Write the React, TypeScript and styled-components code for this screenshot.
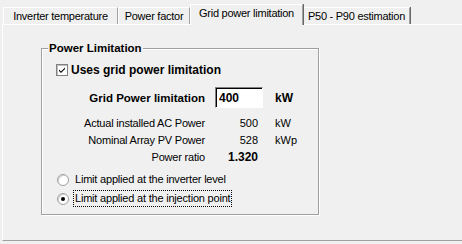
import React from 'react';
import styled, { createGlobalStyle } from 'styled-components';

// Grid power limitation tab of a classic Windows property sheet

const GlobalStyle = createGlobalStyle`
  html, body {
    margin: 0;
    padding: 0;
    background: #f0f0f0;
    width: 462px;
    height: 244px;
    overflow: hidden;
  }
  * {
    box-sizing: border-box;
  }
`;

const Window = styled.div`
  width: 462px;
  height: 244px;
  padding: 4px 0 0 2px;
  font-family: 'Liberation Sans', Arial, sans-serif;
  color: #000;
`;

const TabStrip = styled.div`
  display: flex;
  align-items: flex-end;
  height: 20px;
  padding-left: 1px;
  position: relative;
  z-index: 1;
`;

const Tab = styled.div<{ $active?: boolean; $w: number }>`
  width: ${(p) => p.$w}px;
  height: ${(p) => (p.$active ? '21px' : '17px')};
  margin-bottom: ${(p) => (p.$active ? '-1px' : '0')};
  padding-top: 2px;
  text-align: center;
  background: #f0f0f0;
  border-top: 1px solid #fff;
  border-left: 1px solid #fff;
  border-right: 1px solid #a0a0a0;
  box-shadow: 1px 0 0 #696969;
  font-size: 11px;
  letter-spacing: -0.25px;
  line-height: 13px;
  white-space: nowrap;
  position: relative;
  z-index: ${(p) => (p.$active ? 2 : 0)};
`;

const Panel = styled.div`
  height: 217px;
  width: 470px;
  border-top: 1px solid #fff;
  border-left: 1px solid #fff;
  border-bottom: 1px solid #a0a0a0;
  padding: 23px 0 0 38px;
`;

const GroupBox = styled.div`
  position: relative;
  width: 278px;
  height: 167px;
  border: 1px solid #a0a0a0;
  box-shadow: inset 1px 1px 0 #fff, 1px 1px 0 #fff;
  padding: 14px 0 0 0;
`;

const Legend = styled.div`
  position: absolute;
  top: -8px;
  left: 6px;
  padding: 0 1px;
  background: #f0f0f0;
  font-weight: bold;
  font-size: 11.5px;
  line-height: 14px;
`;

const CheckRow = styled.label`
  display: flex;
  align-items: center;
  gap: 3px;
  height: 13px;
  margin-left: 14px;
  font-weight: bold;
  font-size: 12px;
`;

const CheckBox = styled.span`
  width: 12px;
  height: 12px;
  background: #fff;
  border: 1px solid #808080;
  box-shadow: inset 1px 1px 0 #c0c0c0;
  display: flex;
  align-items: center;
  justify-content: center;
`;

const FieldRow = styled.div<{ $h: number; $top: number }>`
  display: grid;
  grid-template-columns: 163px 48px 1fr;
  column-gap: 10px;
  align-items: center;
  height: ${(p) => p.$h}px;
  margin-top: ${(p) => p.$top}px;
  font-size: 11px;
`;

const Label = styled.div<{ $bold?: boolean }>`
  text-align: right;
  white-space: nowrap;
  font-weight: ${(p) => (p.$bold ? 'bold' : 'normal')};
  font-size: ${(p) => (p.$bold ? '11.5px' : '11px')};
  letter-spacing: ${(p) => (p.$bold ? '0' : '-0.2px')};
`;

const Value = styled.div<{ $bold?: boolean }>`
  text-align: right;
  padding-right: 5px;
  font-weight: ${(p) => (p.$bold ? 'bold' : 'normal')};
  font-size: ${(p) => (p.$bold ? '12px' : '11px')};
`;

const Unit = styled.div<{ $bold?: boolean }>`
  padding-left: 2px;
  font-weight: ${(p) => (p.$bold ? 'bold' : 'normal')};
  font-size: ${(p) => (p.$bold ? '12px' : '11px')};
`;

const Input = styled.div`
  height: 21px;
  background: #fff;
  border-top: 1px solid #808080;
  border-left: 1px solid #808080;
  border-right: 1px solid #fff;
  border-bottom: 1px solid #fff;
  box-shadow: inset 1px 1px 0 #000;
  padding: 3px 0 0 3px;
  font-weight: bold;
  font-size: 12px;
  line-height: 14px;
`;

const RadioRow = styled.label<{ $top: number }>`
  display: flex;
  align-items: center;
  gap: 5px;
  height: 17px;
  margin: ${(p) => p.$top}px 0 0 15px;
  font-size: 11px;
  letter-spacing: -0.2px;
`;

const RadioDot = styled.span<{ $checked?: boolean }>`
  width: 12px;
  height: 12px;
  border-radius: 50%;
  background: #fff;
  border: 1px solid #a0a0a0;
  box-shadow: inset 1px 1px 0 #d0d0d0;
  display: flex;
  align-items: center;
  justify-content: center;
  &::after {
    content: '';
    width: 4px;
    height: 4px;
    border-radius: 50%;
    background: ${(p) => (p.$checked ? '#000' : 'transparent')};
  }
`;

const RadioText = styled.span<{ $focused?: boolean }>`
  padding: 1px 1px;
  line-height: 13px;
  outline: ${(p) => (p.$focused ? '1px dotted #000' : 'none')};
`;

const CheckMark = () => (
  <svg width="8" height="8" viewBox="0 0 8 8">
    <path d="M1 3.5 L3 5.5 L7 1.5 L7 3 L3 7 L1 5 Z" fill="#000" />
  </svg>
);

const tabs = [
  { title: 'Inverter temperature', w: 115 },
  { title: 'Power factor', w: 72 },
  { title: 'Grid power limitation', w: 113 },
  { title: 'P50 - P90 estimation', w: 107 },
];

const info = [
  { label: 'Actual installed AC Power', value: '500', unit: 'kW' },
  { label: 'Nominal Array PV Power', value: '528', unit: 'kWp' },
];

const App: React.FC = () => {
  return (
    <Window>
      <GlobalStyle />
      <TabStrip>
        {tabs.map((t) => (
          <Tab key={t.title} $w={t.w} $active={t.title === 'Grid power limitation'}>
            {t.title}
          </Tab>
        ))}
      </TabStrip>

      <Panel>
        <GroupBox>
          <Legend>Power Limitation</Legend>

          <CheckRow>
            <CheckBox>
              <CheckMark />
            </CheckBox>
            Uses grid power limitation
          </CheckRow>

          <FieldRow $h={21} $top={11}>
            <Label $bold>Grid Power limitation</Label>
            <Input>400</Input>
            <Unit $bold>kW</Unit>
          </FieldRow>

          {info.map((row, i) => (
            <FieldRow key={row.label} $h={17} $top={i === 0 ? 6 : 0}>
              <Label>{row.label}</Label>
              <Value>{row.value}</Value>
              <Unit>{row.unit}</Unit>
            </FieldRow>
          ))}
          <FieldRow $h={17} $top={0}>
            <Label>Power ratio</Label>
            <Value $bold>1.320</Value>
            <Unit />
          </FieldRow>

          <RadioRow $top={6}>
            <RadioDot />
            <RadioText>Limit applied at the inverter level</RadioText>
          </RadioRow>
          <RadioRow $top={2}>
            <RadioDot $checked />
            <RadioText $focused>Limit applied at the injection point</RadioText>
          </RadioRow>
        </GroupBox>
      </Panel>
    </Window>
  );
};

export default App;
